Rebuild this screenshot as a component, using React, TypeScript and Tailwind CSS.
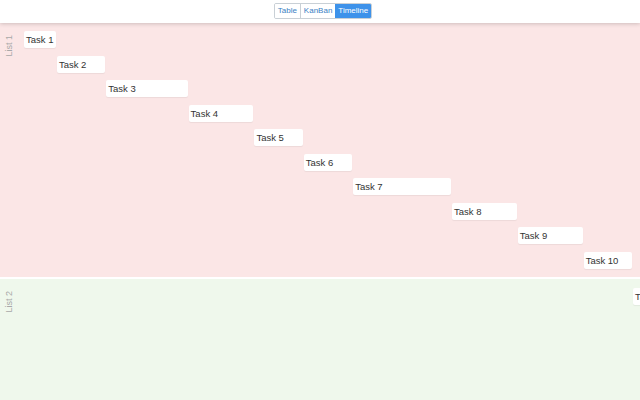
import React from 'react';

type Task = { name: string; start: number; days: number; list: number };

const UNIT = 16.46;
const ORIGIN = 24;

const tasks: Task[] = [
  { name: 'Task 1', start: 0, days: 2, list: 1 },
  { name: 'Task 2', start: 2, days: 3, list: 1 },
  { name: 'Task 3', start: 5, days: 5, list: 1 },
  { name: 'Task 4', start: 10, days: 4, list: 1 },
  { name: 'Task 5', start: 14, days: 3, list: 1 },
  { name: 'Task 6', start: 17, days: 3, list: 1 },
  { name: 'Task 7', start: 20, days: 6, list: 1 },
  { name: 'Task 8', start: 26, days: 4, list: 1 },
  { name: 'Task 9', start: 30, days: 4, list: 1 },
  { name: 'Task 10', start: 34, days: 3, list: 1 },
  { name: 'Task 11', start: 37, days: 3, list: 2 },
];

function TaskBar({ task }: { task: Task }) {
  return (
    <div className="relative h-[24.5px]">
      <div
        className="absolute top-0 h-[17px] bg-white rounded-[2px] shadow-[0_1px_1px_rgba(0,0,0,0.06)] pl-[2px] text-[9.5px] leading-[17px] text-[#333] whitespace-nowrap overflow-hidden"
        style={{ left: ORIGIN + task.start * UNIT, width: task.days * UNIT - 1 }}
      >
        {task.name}
      </div>
    </div>
  );
}

function Lane({ title, list, className }: { title: string; list: number; className: string }) {
  return (
    <section className={`relative overflow-hidden pt-[8px] pb-[8px] ${className}`}>
      <div className="absolute left-[3px] top-[8px] w-[14px] h-[30px] flex items-start justify-center">
        <span className="block -rotate-90 origin-center translate-y-[8px] text-[9px] text-[#a8a8a8] whitespace-nowrap">
          {title}
        </span>
      </div>
      {tasks.filter((t) => t.list === list).map((t) => (
        <TaskBar key={t.name} task={t} />
      ))}
    </section>
  );
}

export default function App() {
  return (
    <div className="w-[640px] h-[400px] overflow-hidden bg-white font-['Liberation_Sans',Arial,sans-serif] flex flex-col">
      <header className="relative z-10 h-[23px] bg-white shadow-[0_1px_4px_rgba(0,0,0,0.18)] flex items-start justify-center pt-[3px] shrink-0">
        <div className="ml-[6px] flex h-[16px] border border-[#c9d0d6] rounded-[2px] text-[8px] leading-[14px] overflow-hidden">
          <button className="px-[3px] text-[#3b7fc4] bg-white border-r border-[#c9d0d6]">Table</button>
          <button className="px-[3px] text-[#3b7fc4] bg-white">KanBan</button>
          <button className="px-[3px] text-white bg-[#3d92ea]">Timeline</button>
        </div>
      </header>
      <Lane title="List 1" list={1} className="h-[254px] bg-[#fbe6e6] shrink-0" />
      <div className="h-[2px] bg-white shrink-0" />
      <Lane title="List 2" list={2} className="flex-1 bg-[#eff8ec] pt-[9px]" />
    </div>
  );
}
